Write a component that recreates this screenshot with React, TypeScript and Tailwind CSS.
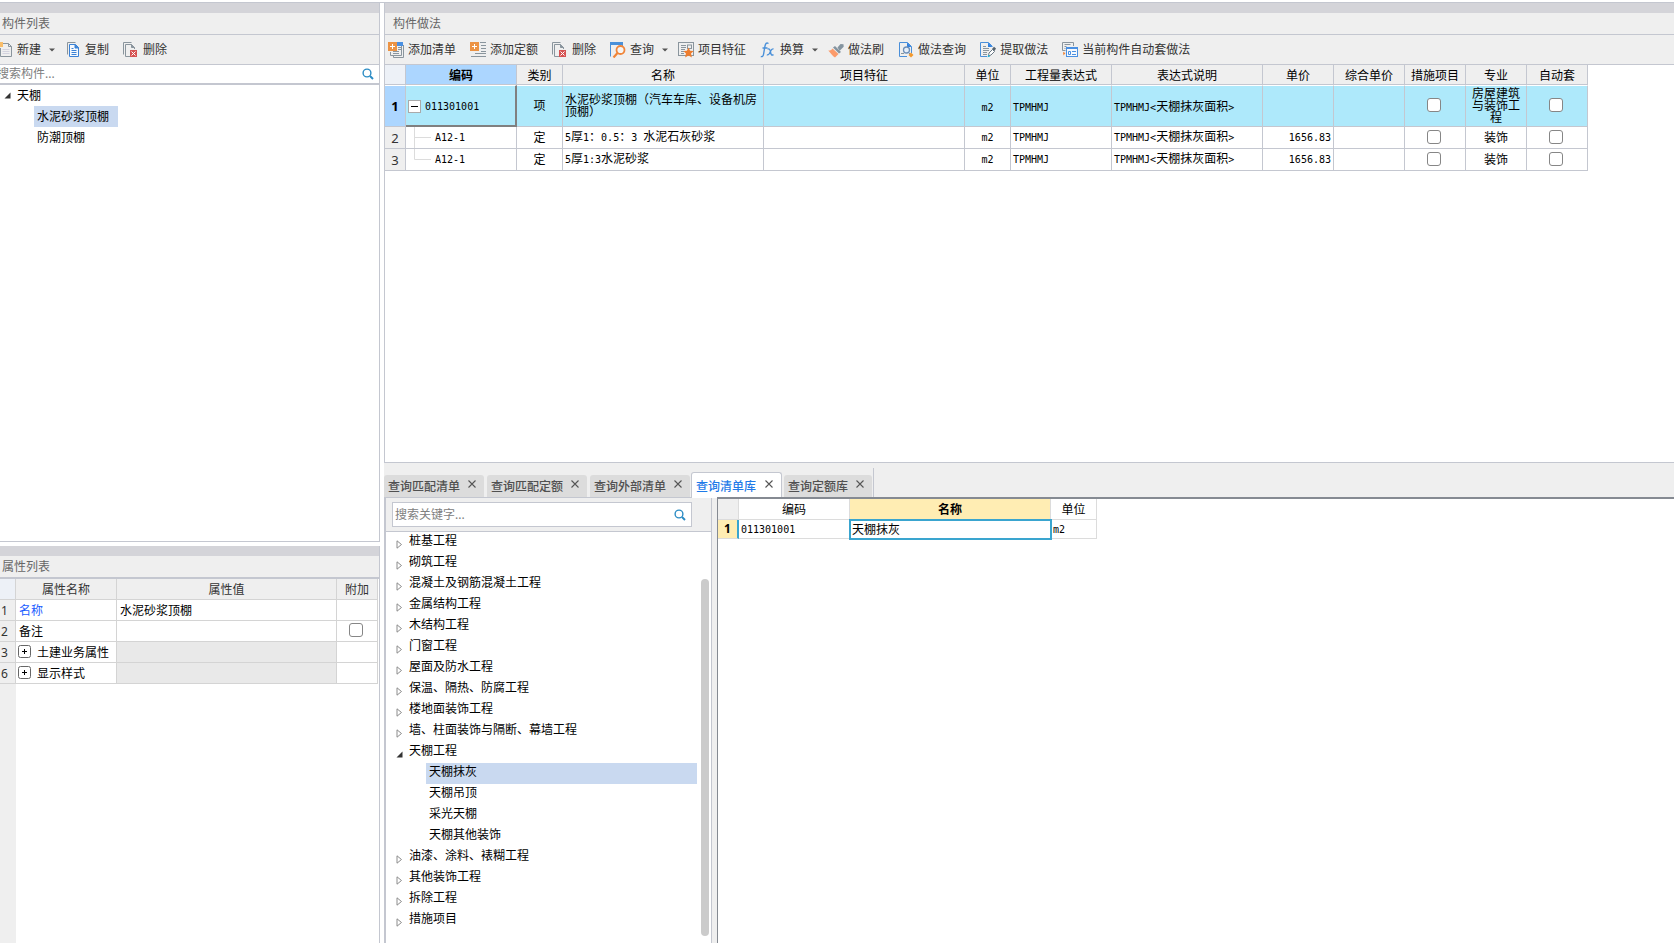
import type { ReactNode } from "react";

const UI = "font-['Noto_Sans','Noto_Sans_CJK_SC',sans-serif]";

/* ---------- icons ---------- */

function Svg({ children }: { children: ReactNode }) {
  return (
    <svg width="16" height="16" viewBox="0 0 16 16" fill="none" className="shrink-0" aria-hidden="true">
      {children}
    </svg>
  );
}

const NewIcon = () => (
  <Svg>
    <path d="M6 1.5h5.5l3 3v10H3.5V6" stroke="#8a959d" />
    <path d="M11.5 1.5v3h3" stroke="#8a959d" />
    <path d="M5.500 7.500h7M5.500 9.500h7M5.500 11.500h7" stroke="#d3d3df" />
    <path d="M1 0l2 1.500L5 0v5L3 3.500 1 5z" fill="#f39a2d" />
    <path d="M3 0h3v5H3z" fill="#f8bd6a" />
  </Svg>
);

const CopyIcon = () => (
  <Svg>
    <path d="M2.500 12.500v-12h8" stroke="#8a959d" />
    <path d="M4.500 2.500h6l3 3v9h-9z" stroke="#3b82d6" fill="#f6f9fd" />
    <path d="M10 2.500v3.500h3.500z" fill="#3b82d6" stroke="#3b82d6" />
    <path d="M6.500 6.500h2M6.500 8.500h5M6.500 10.500h5M6.500 12.500h5" stroke="#3b82d6" />
  </Svg>
);

const DeleteIcon = () => (
  <Svg>
    <path d="M.5 12.500v-12h8" stroke="#8a959d" />
    <path d="M7 14.500H2.500v-12h6l3 3V7" stroke="#8a959d" />
    <path d="M8.500 2.500v3h3z" fill="#8a959d" stroke="#8a959d" />
    <rect x="7" y="8" width="7" height="7" fill="#d65252" />
    <path d="M8.500 9.500l4 4M12.500 9.500l-4 4" stroke="#fff" />
  </Svg>
);

const AddListIcon = () => (
  <Svg>
    <rect x="9" y="0" width="6" height="4" fill="#4a90e2" />
    <path d="M15.500 3v12.500H5.500V13" stroke="#8a959d" />
    <path d="M13.500 4v9.500H2.500V10" stroke="#8a959d" />
    <path d="M10 5.500h3M10 7.500h3M5 9.500h6M5 11.500h6" stroke="#8a959d" />
    <rect x="0" y="0" width="9" height="9" fill="#ec9344" />
    <path d="M2 4.500h5M4.500 2v5" stroke="#fff" />
  </Svg>
);

const AddQuotaIcon = () => (
  <Svg>
    <path d="M10 .5h6M11 3.500h5M11 6.500h5M11 9.500h5M5 11.500h11M1 14.500h15" stroke="#8a959d" />
    <rect x="0" y="0" width="9" height="9" fill="#ec9344" />
    <path d="M2 4.500h5M4.500 2v5" stroke="#fff" />
  </Svg>
);

const QueryIcon = () => (
  <Svg>
    <path d="M.5 14.500V1h12v3" stroke="#4a90d9" />
    <path d="M0 0h13v3H0z" fill="#4a90d9" />
    <circle cx="10.500" cy="8" r="4" stroke="#f0853a" strokeWidth="1.800" fill="#f5f5f5" />
    <path d="M7.500 11l-4 4.500" stroke="#f0853a" strokeWidth="2.200" />
  </Svg>
);

const FeatureIcon = () => (
  <Svg>
    <rect x=".5" y=".5" width="15" height="13" stroke="#8a959d" />
    <path d="M3 3.500h5M3 5.500h5M3 7.500h4M3 9.500h3M3 11.500h3" stroke="#8a959d" />
    <rect x="9.500" y="3" width="4" height="3.500" stroke="#8a959d" />
    <path d="M10.500 5.500l1.600 3.200 3.600.3-2.700 2.500.9 4-3.400-2-3.400 2 .9-4L5.400 9l3.500-.3z" fill="#ee7d2e" />
  </Svg>
);

const FxIcon = () => (
  <Svg>
    <path d="M8.500 1.500C6.500.3 5.500 1.500 5 4L3.600 12c-.4 2.300-1.300 3-2.800 2.500M2.500 6h5" stroke="#4a90d9" strokeWidth="1.400" />
    <path d="M7.500 7.200c2-.9 2.500.3 3 2.800.5 2.600 1 3.700 3 2.600M13.500 7c-1.500-.4-2.300.8-3 2.500-.9 2.200-1.800 4-3.700 3.300" stroke="#4a90d9" strokeWidth="1.300" />
  </Svg>
);

const BrushIcon = () => (
  <Svg>
    <path d="M9.500 5.500L12.500 2l3 .2.2 2.600-4 4z" fill="#8494a0" />
    <path d="M7 4l6 6-2 1.500-6-6z" fill="#8494a0" />
    <path d="M4.500 6.500l6 5.500-3.500 3.500C5 14.500 3.500 12 .3 8.500c1.700.2 3.200-.4 4.200-2z" fill="#fb9b6b" />
  </Svg>
);

const MethodQueryIcon = () => (
  <Svg>
    <path d="M9 14.500H1.500V.5h8l4 4V11" stroke="#4a8fd9" />
    <path d="M9 .5V5h4.500z" fill="#2f80e0" />
    <path d="M3 11.500h3" stroke="#8a959d" />
    <circle cx="8.500" cy="8" r="3" stroke="#6d8fb8" strokeWidth="1.300" fill="#e6effa" />
    <path d="M10.500 10.500l1.500 1.500" stroke="#6d8fb8" />
    <path d="M13 10.500l2.500 2.500-2.500 2.500-2.500-2.500z" fill="#f2992e" />
  </Svg>
);

const ExtractIcon = () => (
  <Svg>
    <path d="M7 14.500H.5V.5h8l4 4" stroke="#4a8fd9" />
    <path d="M8 .5V5h4.500z" fill="#2f80e0" />
    <path d="M3 4.500h3M3 6.500h6M3 8.500h6M3 10.500h4M3 12.500h4" stroke="#8a959d" />
    <path d="M8.500 14l.5-3 3.500-3.500 2 2-3.500 3.500z" fill="#fff" stroke="#6b7a86" />
    <path d="M12 7l2-2.300 2 1.800L14.500 9z" fill="#56636e" />
    <path d="M7.500 15.200l.7-2.500 2 1.800z" fill="#1fb5d8" />
  </Svg>
);

const AutoIcon = () => (
  <Svg>
    <path d="M11.500 4V.5H.5v8h3" stroke="#8a959d" />
    <path d="M2.500 2.500h6M2.500 4.500h2M2.500 6.500h1" stroke="#8a959d" />
    <rect x="4.500" y="5.500" width="11" height="9" stroke="#4a90e2" fill="#f6f9fd" />
    <path d="M4.500 6.500h11" stroke="#4a90e2" />
    <path d="M6.500 9.500h2v3h-2zM10 9.500h4M10 12.500h4" stroke="#4a90e2" />
    <path d="M1 10l2.500 1L1.500 13.500z" fill="#f08030" />
  </Svg>
);

const SearchIcon = () => (
  <svg width="12" height="12" viewBox="0 0 12 12" fill="none" className="shrink-0" aria-hidden="true">
    <circle cx="5" cy="5" r="3.900" stroke="#2b8cc4" strokeWidth="1.400" />
    <path d="M8 8l3 3" stroke="#2b8cc4" strokeWidth="2" />
  </svg>
);

const Caret = () => (
  <svg width="6" height="4" viewBox="0 0 6 4" className="ml-1 -mr-1 shrink-0" aria-hidden="true">
    <path d="M0 .5h6L3 3.500z" fill="#555" />
  </svg>
);

const OpenMark = () => (
  <svg width="7" height="7" viewBox="0 0 7 7" className="shrink-0" aria-hidden="true">
    <path d="M6.500.5v6h-6z" fill="#333" />
  </svg>
);

const ClosedMark = () => (
  <svg width="7" height="9" viewBox="0 0 7 9" fill="none" className="shrink-0" aria-hidden="true">
    <path d="M1 .8L5.500 4.500 1 8.200z" stroke="#8c8c8c" />
  </svg>
);

const BoxMark = ({ plus }: { plus?: boolean }) => (
  <svg width="13" height="13" viewBox="0 0 13 13" className="shrink-0" aria-hidden="true">
    <rect x=".5" y=".5" width="12" height="12" rx={plus ? 2 : 0} fill="#fff" stroke={plus ? "#666" : "#aaa"} />
    <path d={plus ? "M4 6.500h5M6.500 4v5" : "M3 6.500h7"} stroke="#000" />
  </svg>
);

/* ---------- shared parts ---------- */

/** Grid text: Latin runs take half the width of an ideograph. */
function Grid({ text }: { text: string }) {
  return (
    <>
      {text.split(/([\x20-\x7e]+)/).map((part, i) =>
        i % 2 ? (
          <span key={i} className="font-['DejaVu_Sans_Mono',monospace] text-[10px] whitespace-pre">
            {part}
          </span>
        ) : (
          part
        ),
      )}
    </>
  );
}

function Tool({ icon, label, menu }: { icon: ReactNode; label: string; menu?: boolean }) {
  return (
    <button type="button" className="flex shrink-0 items-center gap-1 whitespace-nowrap text-[#333]">
      {icon}
      <span>{label}</span>
      {menu && <Caret />}
    </button>
  );
}

const Check = ({ label }: { label: string }) => (
  <input
    type="checkbox"
    aria-label={label}
    className="mx-auto block size-[14px] appearance-none rounded-[3px] border border-[#868686] bg-white checked:bg-[#4a90e2]"
  />
);

function PanelTitle({ children, className }: { children: ReactNode; className: string }) {
  return (
    <>
      <div className="h-[10px] shrink-0 bg-[#d4d4d9]" />
      <h2 className={`flex shrink-0 items-center border-[#c4c7d0] bg-[#efefef] text-[#666] ${className}`}>{children}</h2>
    </>
  );
}

/* ---------- left side ---------- */

function ComponentList() {
  return (
    <section className="flex min-h-0 flex-[539_1_0%] flex-col overflow-hidden border-r border-b border-[#c4c7d0]">
      <PanelTitle className="h-[22px] border-b pl-0.5">构件列表</PanelTitle>
      <div className="flex h-[30px] shrink-0 items-center border-b border-[#c4c7d0] bg-[#efefef]">
        <div className="-ml-[3px] flex gap-[14px]">
          <Tool icon={<NewIcon />} label="新建" menu />
          <Tool icon={<CopyIcon />} label="复制" />
          <Tool icon={<DeleteIcon />} label="删除" />
        </div>
      </div>
      <label className="flex h-5 shrink-0 items-center border-b-2 border-[#c4c7d0] pr-[5px]">
        <input
          aria-label="搜索构件"
          placeholder="搜索构件..."
          className="-ml-[3px] min-w-0 flex-1 outline-none placeholder:text-[#808080]"
        />
        <SearchIcon />
      </label>
      <ul className="leading-[21px]">
        <li>
          <div className="flex items-center gap-[6px] pl-1">
            <OpenMark />
            天棚
          </div>
          <ul className="pl-[34px]">
            <li className="w-fit bg-[#c9d9f0] pr-[9px] pl-[3px]">水泥砂浆顶棚</li>
            <li className="pl-[3px]">防潮顶棚</li>
          </ul>
        </li>
      </ul>
    </section>
  );
}

const PC = "border-r border-b border-[#d4d4d4] p-0 pt-0.5";

function PropertyList() {
  return (
    <section className="flex min-h-0 flex-[397_1_0%] flex-col overflow-hidden border-r border-[#c4c7d0]">
      <PanelTitle className="h-[23px] border-b-2 pl-0.5">属性列表</PanelTitle>
      <table className="w-[378px] table-fixed border-separate border-spacing-0">
        <colgroup>
          <col className="w-4" />
          <col className="w-[101px]" />
          <col />
          <col className="w-[41px]" />
        </colgroup>
        <thead>
          <tr className="h-[21px] bg-[#efefef] text-[#333]">
            <th className={`${PC} bg-[#edf1f7]`} />
            <th className={`${PC} font-normal`}>属性名称</th>
            <th className={`${PC} font-normal`}>属性值</th>
            <th className={`${PC} font-normal`}>附加</th>
          </tr>
        </thead>
        <tbody>
          <tr className="h-[21px]">
            <td className={`${PC} bg-[#efefef] pl-px text-[#333]`}>1</td>
            <td className={`${PC} pl-[3px] text-[#1a5cff]`}>名称</td>
            <td className={`${PC} pl-[3px]`}>水泥砂浆顶棚</td>
            <td className={PC} />
          </tr>
          <tr className="h-[21px]">
            <td className={`${PC} bg-[#efefef] pl-px text-[#333]`}>2</td>
            <td className={`${PC} pl-[3px]`}>备注</td>
            <td className={PC} />
            <td className="border-r border-b border-[#d4d4d4] p-0 pr-0.5 pb-0.5">
              <Check label="备注附加" />
            </td>
          </tr>
          {[
            ["3", "土建业务属性"],
            ["6", "显示样式"],
          ].map(([n, name]) => (
            <tr key={n} className="h-[21px]">
              <td className={`${PC} bg-[#efefef] pl-px text-[#333]`}>{n}</td>
              <td className={PC}>
                <div className="flex items-start gap-[6px] pl-0.5">
                  <BoxMark plus />
                  {name}
                </div>
              </td>
              <td className={`${PC} bg-[#e9e9e9]`} />
              <td className={PC} />
            </tr>
          ))}
        </tbody>
      </table>
      <div className="w-4 flex-1 bg-[#efefef]" />
    </section>
  );
}

/* ---------- upper right ---------- */

const MC = "border-r border-b border-[#c4c7d0] p-0";

const TreeLine = ({ last }: { last?: boolean }) => (
  <svg width="26" height="21" viewBox="0 0 26 21" fill="none" className="shrink-0" aria-hidden="true">
    <path d={last ? "M8.500 0v10.500H25" : "M8.500 0v21M8.500 10.500H25"} stroke="#dcdcdc" />
  </svg>
);

function MethodPanel() {
  const heads = ["类别", "名称", "项目特征", "单位", "工程量表达式", "表达式说明", "单价", "综合单价", "措施项目", "专业", "自动套"];
  return (
    <section className="flex min-h-0 flex-[460_1_0%] flex-col overflow-hidden border-b border-l border-[#c4c7d0]">
      <PanelTitle className="h-[22px] border-b pl-2">构件做法</PanelTitle>
      <div className="flex h-[30px] shrink-0 items-center gap-[14px] border-b border-[#c4c7d0] bg-[#efefef] pl-[3px]">
        <Tool icon={<AddListIcon />} label="添加清单" />
        <Tool icon={<AddQuotaIcon />} label="添加定额" />
        <Tool icon={<DeleteIcon />} label="删除" />
        <Tool icon={<QueryIcon />} label="查询" menu />
        <Tool icon={<FeatureIcon />} label="项目特征" />
        <Tool icon={<FxIcon />} label="换算" menu />
        <Tool icon={<BrushIcon />} label="做法刷" />
        <Tool icon={<MethodQueryIcon />} label="做法查询" />
        <Tool icon={<ExtractIcon />} label="提取做法" />
        <Tool icon={<AutoIcon />} label="当前构件自动套做法" />
      </div>
      <table className="w-[1203px] table-fixed border-separate border-spacing-0">
        <colgroup>
          <col className="w-[21px]" />
          <col className="w-[111px]" />
          <col className="w-[46px]" />
          <col className="w-[201px]" />
          <col className="w-[201px]" />
          <col className="w-[46px]" />
          <col className="w-[101px]" />
          <col className="w-[151px]" />
          <col className="w-[71px]" />
          <col className="w-[71px]" />
          <col className="w-[61px]" />
          <col className="w-[61px]" />
          <col className="w-[61px]" />
        </colgroup>
        <thead>
          <tr className="h-5 bg-[#efefef]">
            <th className={`${MC} bg-[#edf1f7]`} />
            <th className={`${MC} bg-[#acd6ff] pt-0.5 font-bold`}>编码</th>
            {heads.map((h) => (
              <th key={h} className={`${MC} pt-0.5 font-normal`}>
                {h}
              </th>
            ))}
          </tr>
        </thead>
        <tbody>
          <tr className="h-[42px] bg-[#aee9fb] leading-3 [&>td]:border-t [&>td]:border-t-white">
            <td className={`${MC} bg-[#acd6ff] text-center text-[13px] font-bold`}>1</td>
            <td className="border-r-2 border-b-2 border-[#808080] p-0 pt-0.5">
              <div className="flex items-center gap-1 pl-0.5">
                <BoxMark />
                <Grid text="011301001" />
              </div>
            </td>
            <td className={`${MC} text-center`}>项</td>
            <td className={`${MC} pl-0.5`}>水泥砂浆顶棚（汽车车库、设备机房顶棚）</td>
            <td className={MC} />
            <td className={`${MC} pt-0.5 text-center`}>
              <Grid text="m2" />
            </td>
            <td className={`${MC} pt-0.5 pl-0.5`}>
              <Grid text="TPMHMJ" />
            </td>
            <td className={`${MC} pt-0.5 pl-0.5`}>
              <Grid text="TPMHMJ<天棚抹灰面积>" />
            </td>
            <td className={MC} />
            <td className={MC} />
            <td className={`${MC} pr-0.5 pb-0.5`}>
              <Check label="第1行措施项目" />
            </td>
            <td className={`${MC} px-1 text-center`}>房屋建筑与装饰工程</td>
            <td className={`${MC} pr-0.5 pb-0.5`}>
              <Check label="第1行自动套" />
            </td>
          </tr>
          {["5厚1：0.5：3 水泥石灰砂浆", "5厚1:3水泥砂浆"].map((name, i) => (
            <tr key={name} className="h-[22px] leading-4">
              <td className={`${MC} bg-[#efefef] text-center text-[13px] text-[#333]`}>{i + 2}</td>
              <td className={MC}>
                <div className="flex items-center gap-[3px]">
                  <TreeLine last={i === 1} />
                  <Grid text="A12-1" />
                </div>
              </td>
              <td className={`${MC} text-center`}>定</td>
              <td className={`${MC} pl-0.5`}>
                <Grid text={name} />
              </td>
              <td className={MC} />
              <td className={`${MC} text-center`}>
                <Grid text="m2" />
              </td>
              <td className={`${MC} pl-0.5`}>
                <Grid text="TPMHMJ" />
              </td>
              <td className={`${MC} pl-0.5`}>
                <Grid text="TPMHMJ<天棚抹灰面积>" />
              </td>
              <td className={`${MC} pr-0.5 text-right`}>
                <Grid text="1656.83" />
              </td>
              <td className={MC} />
              <td className={`${MC} pr-0.5 pb-0.5`}>
                <Check label={`第${i + 2}行措施项目`} />
              </td>
              <td className={`${MC} text-center`}>装饰</td>
              <td className={`${MC} pr-0.5 pb-0.5`}>
                <Check label={`第${i + 2}行自动套`} />
              </td>
            </tr>
          ))}
        </tbody>
      </table>
    </section>
  );
}

/* ---------- lower right ---------- */

function Tab({ label, active }: { label: string; active?: boolean }) {
  return (
    <div
      className={
        active
          ? "-mr-px -mb-px -ml-0.5 flex h-[26px] items-center gap-[9px] rounded-t-[3px] border border-b-0 border-[#c4c7d0] bg-white pr-2 pl-1 text-[#1f7ae8]"
          : "flex h-[22px] items-center gap-2 rounded-t-[3px] bg-[#dcdcdc] pr-2 pl-1 text-[#505050]"
      }
    >
      <button type="button" className="pt-0.5 font-medium whitespace-nowrap">
        {label}
      </button>
      <button type="button" aria-label={`关闭${label}`} className="mb-1">
        <svg width="8" height="8" viewBox="0 0 8 8" fill="none" aria-hidden="true">
          <path d="M.5.5l7 7M7.500.5l-7 7" stroke="#555" strokeWidth="1.100" />
        </svg>
      </button>
    </div>
  );
}

const chapters: { name: string; children?: string[] }[] = [
  { name: "桩基工程" },
  { name: "砌筑工程" },
  { name: "混凝土及钢筋混凝土工程" },
  { name: "金属结构工程" },
  { name: "木结构工程" },
  { name: "门窗工程" },
  { name: "屋面及防水工程" },
  { name: "保温、隔热、防腐工程" },
  { name: "楼地面装饰工程" },
  { name: "墙、柱面装饰与隔断、幕墙工程" },
  { name: "天棚工程", children: ["天棚抹灰", "天棚吊顶", "采光天棚", "天棚其他装饰"] },
  { name: "油漆、涂料、裱糊工程" },
  { name: "其他装饰工程" },
  { name: "拆除工程" },
  { name: "措施项目" },
];

const QC = "border-r border-b border-[#dcdcdc] p-0";

function QueryPanel() {
  return (
    <section className="flex min-h-0 flex-[481_1_0%] flex-col overflow-hidden bg-[#efefef]">
      <div className="flex shrink-0 border-b border-[#c4c7d0] pt-[5px]">
        <div className="flex h-[29px] items-end gap-[3px] border-r border-[#c4c7d0] pr-px">
          <Tab label="查询匹配清单" />
          <Tab label="查询匹配定额" />
          <Tab label="查询外部清单" />
          <Tab label="查询清单库" active />
          <Tab label="查询定额库" />
        </div>
      </div>
      <div className="flex min-h-0 flex-1 gap-[5px]">
        <div className="flex w-[328px] shrink-0 flex-col border-r border-l-2 border-[#c4c7d0]">
          <div className="h-[34px] shrink-0 border-b border-[#c4c7d0] pt-1 pl-1.5">
            <label className="flex h-[25px] w-[300px] items-center border border-[#c4c7d0] bg-white pr-[5px] pl-0.5">
              <input
                aria-label="搜索关键字"
                placeholder="搜索关键字..."
                className="min-w-0 flex-1 outline-none placeholder:text-[#808080]"
              />
              <SearchIcon />
            </label>
          </div>
          <div className="flex min-h-0 flex-1 gap-1 overflow-hidden bg-white pr-0.5">
            <ul className="flex-1 leading-[17px]">
              {chapters.map((c) => (
                <li key={c.name}>
                  <div className="flex h-[21px] items-center gap-[6px] pl-[10px]">
                    <span className="pt-1">{c.children ? <OpenMark /> : <ClosedMark />}</span>
                    <span className="pb-1">{c.name}</span>
                  </div>
                  {c.children && (
                    <ul className="pl-10">
                      {c.children.map((n, i) => (
                        <li key={n} className={i === 0 ? "h-[21px] bg-[#c9d9f0] pl-[3px]" : "h-[21px] pl-[3px]"}>
                          {n}
                        </li>
                      ))}
                    </ul>
                  )}
                </li>
              ))}
            </ul>
            <div className="flex w-2 flex-col pt-[47px] pb-[7px]">
              <div className="flex-1 rounded-full bg-[#cbcbcb]" />
            </div>
          </div>
        </div>
        <div className="-mt-px min-w-0 flex-1 border-t-2 border-l border-[#858a92] bg-white">
          <table className="w-[379px] table-fixed border-separate border-spacing-0">
            <colgroup>
              <col className="w-[21px]" />
              <col className="w-[111px]" />
              <col />
              <col className="w-[46px]" />
            </colgroup>
            <thead>
              <tr className="h-[21px]">
                <th className={`${QC} bg-[#efefef]`} />
                <th className={`${QC} pt-0.5 font-normal`}>编码</th>
                <th className={`${QC} bg-[#ffedb3] pt-0.5 font-bold`}>名称</th>
                <th className={`${QC} pt-0.5 font-normal`}>单位</th>
              </tr>
            </thead>
            <tbody>
              <tr className="h-[19px] leading-4">
                <td className="border-r-2 border-b border-r-[#3aa5cf] border-b-[#dcdcdc] bg-[#ffedb3] p-0 text-center font-bold">1</td>
                <td className={`${QC} pl-0.5`}>
                  <Grid text="011301001" />
                </td>
                <td className="p-0 pl-0.5 outline-2 -outline-offset-1 outline-[#3aa5cf]">天棚抹灰</td>
                <td className={`${QC} pl-0.5`}>
                  <Grid text="m2" />
                </td>
              </tr>
            </tbody>
          </table>
        </div>
      </div>
    </section>
  );
}

export default function App() {
  return (
    <div className={`flex h-screen flex-col overflow-hidden bg-white pt-0.5 text-[12px] leading-4 text-black ${UI}`}>
      <main className="flex min-h-0 flex-1 gap-1 border-t border-[#c4c7d0]">
        <div className="flex w-[380px] shrink-0 flex-col gap-1">
          <ComponentList />
          <PropertyList />
        </div>
        <div className="flex min-w-0 flex-1 flex-col">
          <MethodPanel />
          <QueryPanel />
        </div>
      </main>
    </div>
  );
}
